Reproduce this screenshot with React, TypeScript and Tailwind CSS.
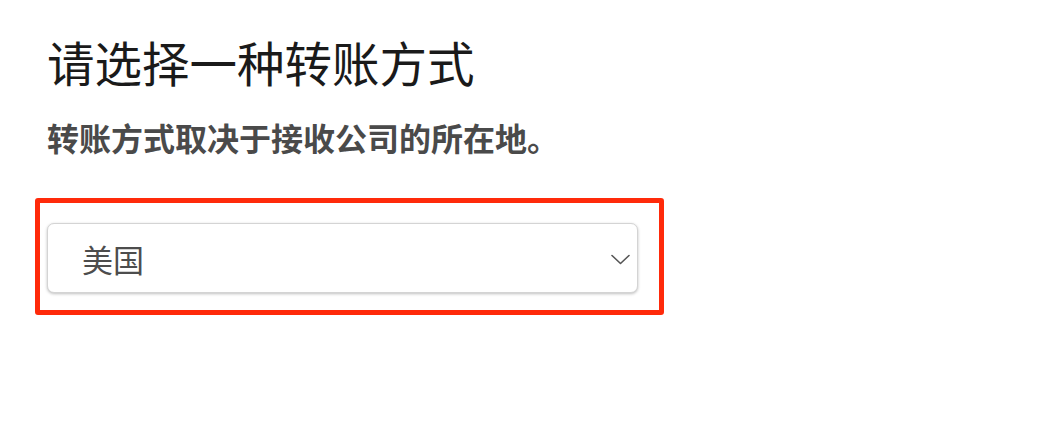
import React from "react";

export default function App() {
  return (
    <div
      className="w-[1038px] h-[432px] bg-white overflow-hidden"
      style={{ fontFamily: '"Noto Sans CJK SC", "Noto Sans", sans-serif' }}
    >
      <div className="pl-[47px] pt-[32px]">
        <h1 className="text-[47.5px] leading-[60px] font-normal text-[#1a1a1a]">
          请选择一种转账方式
        </h1>
        <p className="mt-[23px] text-[32px] leading-[44px] font-semibold text-[#4a4a4a]">
          转账方式取决于接收公司的所在地。
        </p>
      </div>
      <div className="ml-[35px] mt-[39px] w-[629px] h-[117px] border-[5px] border-[#ff2a0a] rounded-[3px] pl-[7px] pt-[20px]">
        <div className="w-[591px] h-[70px] flex items-center justify-between rounded-[7px] border border-[#d4d4d4] bg-white shadow-[0_1px_3px_rgba(0,0,0,0.25)] pl-[34px] pr-[7px]">
          <span className="text-[31px] leading-none text-[#4d4d4d]">美国</span>
          <svg width="19" height="11" viewBox="0 0 19 11" fill="none" className="mt-[2px]">
            <path d="M1 1.5 L9.5 9.5 L18 1.5" stroke="#555" strokeWidth="1.6" strokeLinecap="round" strokeLinejoin="round" />
          </svg>
        </div>
      </div>
    </div>
  );
}
